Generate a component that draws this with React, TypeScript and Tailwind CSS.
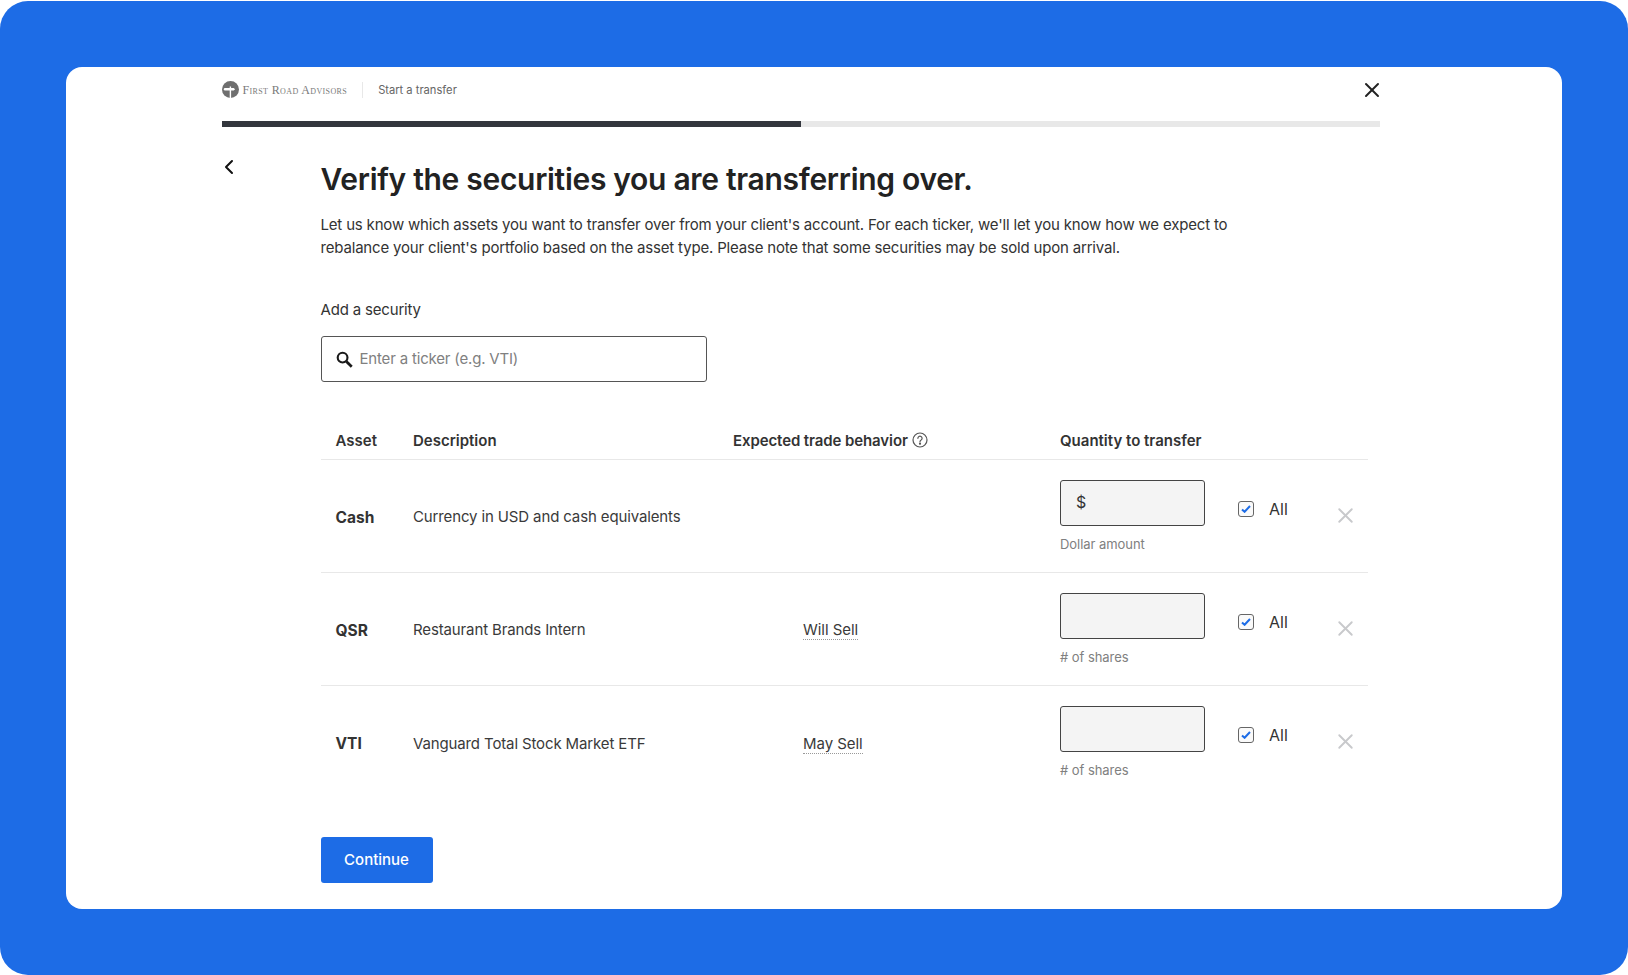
import { ChevronLeft, X } from "lucide-react";

const rows = [
  { asset: "Cash", description: "Currency in USD and cash equivalents", behavior: "", prefix: "$", hint: "Dollar amount" },
  { asset: "QSR", description: "Restaurant Brands Intern", behavior: "Will Sell", prefix: "", hint: "# of shares" },
  { asset: "VTI", description: "Vanguard Total Stock Market ETF", behavior: "May Sell", prefix: "", hint: "# of shares" },
];

function Logo() {
  return (
    <svg width="17" height="17" viewBox="0 0 17 17" className="shrink-0">
      <circle cx="8.5" cy="8.5" r="8.5" fill="#6f6f6f" />
      <path d="M2.5 7h5.2V5.4h1.4V7h2.6l1.4 1.2-1.4 1.2H9.1V17H7.7v-7.6H2.5l-1-1.2z" fill="#fff" />
    </svg>
  );
}

function SearchIcon() {
  return (
    <svg width="17" height="17" viewBox="0 0 16 16" fill="none" stroke="#1a1a1a" className="shrink-0">
      <circle cx="6.2" cy="6.2" r="4.6" strokeWidth="2" />
      <path d="M9.8 9.8 14.8 14.8" strokeWidth="2.6" />
    </svg>
  );
}

function HelpIcon() {
  return (
    <svg width="16" height="16" viewBox="0 0 16 16" fill="none" stroke="#555" strokeWidth="1.2" className="mb-[3px] shrink-0">
      <circle cx="8" cy="8" r="7" />
      <path d="M5.9 6.3a2.1 2.1 0 1 1 3.2 1.8c-.7.4-1.1.8-1.1 1.6" strokeLinecap="round" />
      <circle cx="8" cy="11.7" r=".5" fill="#555" />
    </svg>
  );
}

function CheckBox() {
  return (
    <span className="flex h-4 w-4 items-center justify-center rounded-[3px] border border-[#666] bg-[#fafafa]">
      <svg width="10" height="8" viewBox="0 0 10 8" fill="none" stroke="#1d6ce6" strokeWidth="2">
        <path d="M1 4.4 3.6 6.8 9 1" />
      </svg>
    </span>
  );
}

function SecurityRow({ row, last }: { row: (typeof rows)[number]; last: boolean }) {
  return (
    <div className={`grid h-[113px] grid-cols-[92.5px_320px_327px_178px_100px_29.5px] ${last ? "" : "border-b border-[#e8e8e8]"}`}>
      <div className="flex items-center pl-[15px] pt-[3px] text-[15.5px] font-bold text-[#333]">{row.asset}</div>
      <div className="flex items-center pt-[3px] text-[15px] tracking-[-0.13px] text-[#3a3a3a]">{row.description}</div>
      <div className="flex items-center pl-[70px] pt-[3px] text-[15px] tracking-[-0.05px] text-[#3a3a3a]">
        {row.behavior && (
          <span className="border-b border-dotted border-[#999] leading-[18px]">{row.behavior}</span>
        )}
      </div>
      <div className="pt-5">
        <div className="flex h-[46px] w-[145px] items-center rounded-[3px] border border-[#444] bg-[#f4f4f4] pb-[2px] pl-[15px] text-base text-[#333]">
          {row.prefix}
        </div>
        <p className="mt-[8px] text-[13px] leading-5 tracking-[-0.05px] text-[#808080]">{row.hint}</p>
      </div>
      <div className="flex items-start gap-[15px] pt-[38px]">
        <span className="pt-[3px]"><CheckBox /></span>
        <span className="text-base leading-[22px] text-[#333]">All</span>
      </div>
      <div className="pt-[43px]">
        <X className="h-[25px] w-[25px] -translate-x-[5px] text-[#c8c9cc]" strokeWidth={1.8} />
      </div>
    </div>
  );
}

export default function App() {
  return (
    <div className="h-[975px] w-[1628px] bg-white pt-px font-['Inter','Liberation_Sans',sans-serif]">
      <div className="h-[974px] rounded-[28px] bg-[#1d6ce6] px-[66px] pt-[66px]">
        <div className="h-[842px] w-[1496px] rounded-2xl bg-white pl-[155.5px] pr-[182px]">
          <header className="flex h-[44px] items-center justify-between pt-[1px]">
            <div className="flex items-center">
              <Logo />
              <span className="ml-1 pt-[1px] font-['Liberation_Serif',serif] text-[12px] tracking-[0.37px] text-[#7a7a7a] [font-variant:small-caps]">First Road Advisors</span>
              <span className="mx-[15px] h-4 w-px bg-[#e8e8e8]" />
              <span className="pt-[1px] text-[11.2px] tracking-[-0.02px] text-[#666]">Start a transfer</span>
            </div>
            <X className="h-6 w-6 translate-x-[4px] text-[#222]" strokeWidth={2} />
          </header>

          <div className="mt-[10px] flex h-[6px] w-[1158.5px]">
            <div className="w-[579px] bg-[#33363d]" />
            <div className="flex-1 bg-[#e8e8e8]" />
          </div>

          <div className="flex pt-[28px]">
            <div className="w-[99px] shrink-0">
              <ChevronLeft className="-ml-[5px] h-6 w-6 text-[#111]" strokeWidth={2} />
            </div>
            <main className="w-[1047px]">
              <h1 className="pt-[4px] text-[30px] font-semibold leading-[40px] tracking-[-0.3px] text-[#222]">
                Verify the securities you are transferring over.
              </h1>
              <p className="mt-[14px] w-[920px] text-[15px] leading-[23px] tracking-[-0.18px] text-[#333]">
                Let us know which assets you want to transfer over from your client's account. For each ticker, we'll let you know how we expect to rebalance your client's portfolio based on the asset type. Please note that some securities may be sold upon arrival.
              </p>

              <label className="mt-[39px] block text-[15px] leading-6 tracking-[-0.18px] text-[#333]">Add a security</label>
              <div className="mt-[14px] flex h-[46px] w-[386px] items-center gap-[7px] rounded-[3px] border border-[#555] pl-[14px]">
                <SearchIcon />
                <span className="text-[15px] tracking-[-0.18px] text-[#808080]">Enter a ticker (e.g. VTI)</span>
              </div>

              <div className="mt-[41px] grid h-[37px] grid-cols-[92.5px_320px_327px_1fr] border-b border-[#e8e8e8] text-[15px] font-semibold leading-[36px] text-[#333]">
                <span className="pl-[15px]">Asset</span>
                <span>Description</span>
                <span className="flex h-[36px] items-center gap-[4px] tracking-[-0.1px]">Expected trade behavior <HelpIcon /></span>
                <span>Quantity to transfer</span>
              </div>

              {rows.map((row, i) => (
                <SecurityRow key={row.asset} row={row} last={i === rows.length - 1} />
              ))}

              <button className="mt-[38px] h-[46px] w-[112px] rounded-[3px] bg-[#1d6ce6] text-[15px] font-medium text-white">
                Continue
              </button>
            </main>
          </div>
        </div>
      </div>
    </div>
  );
}
